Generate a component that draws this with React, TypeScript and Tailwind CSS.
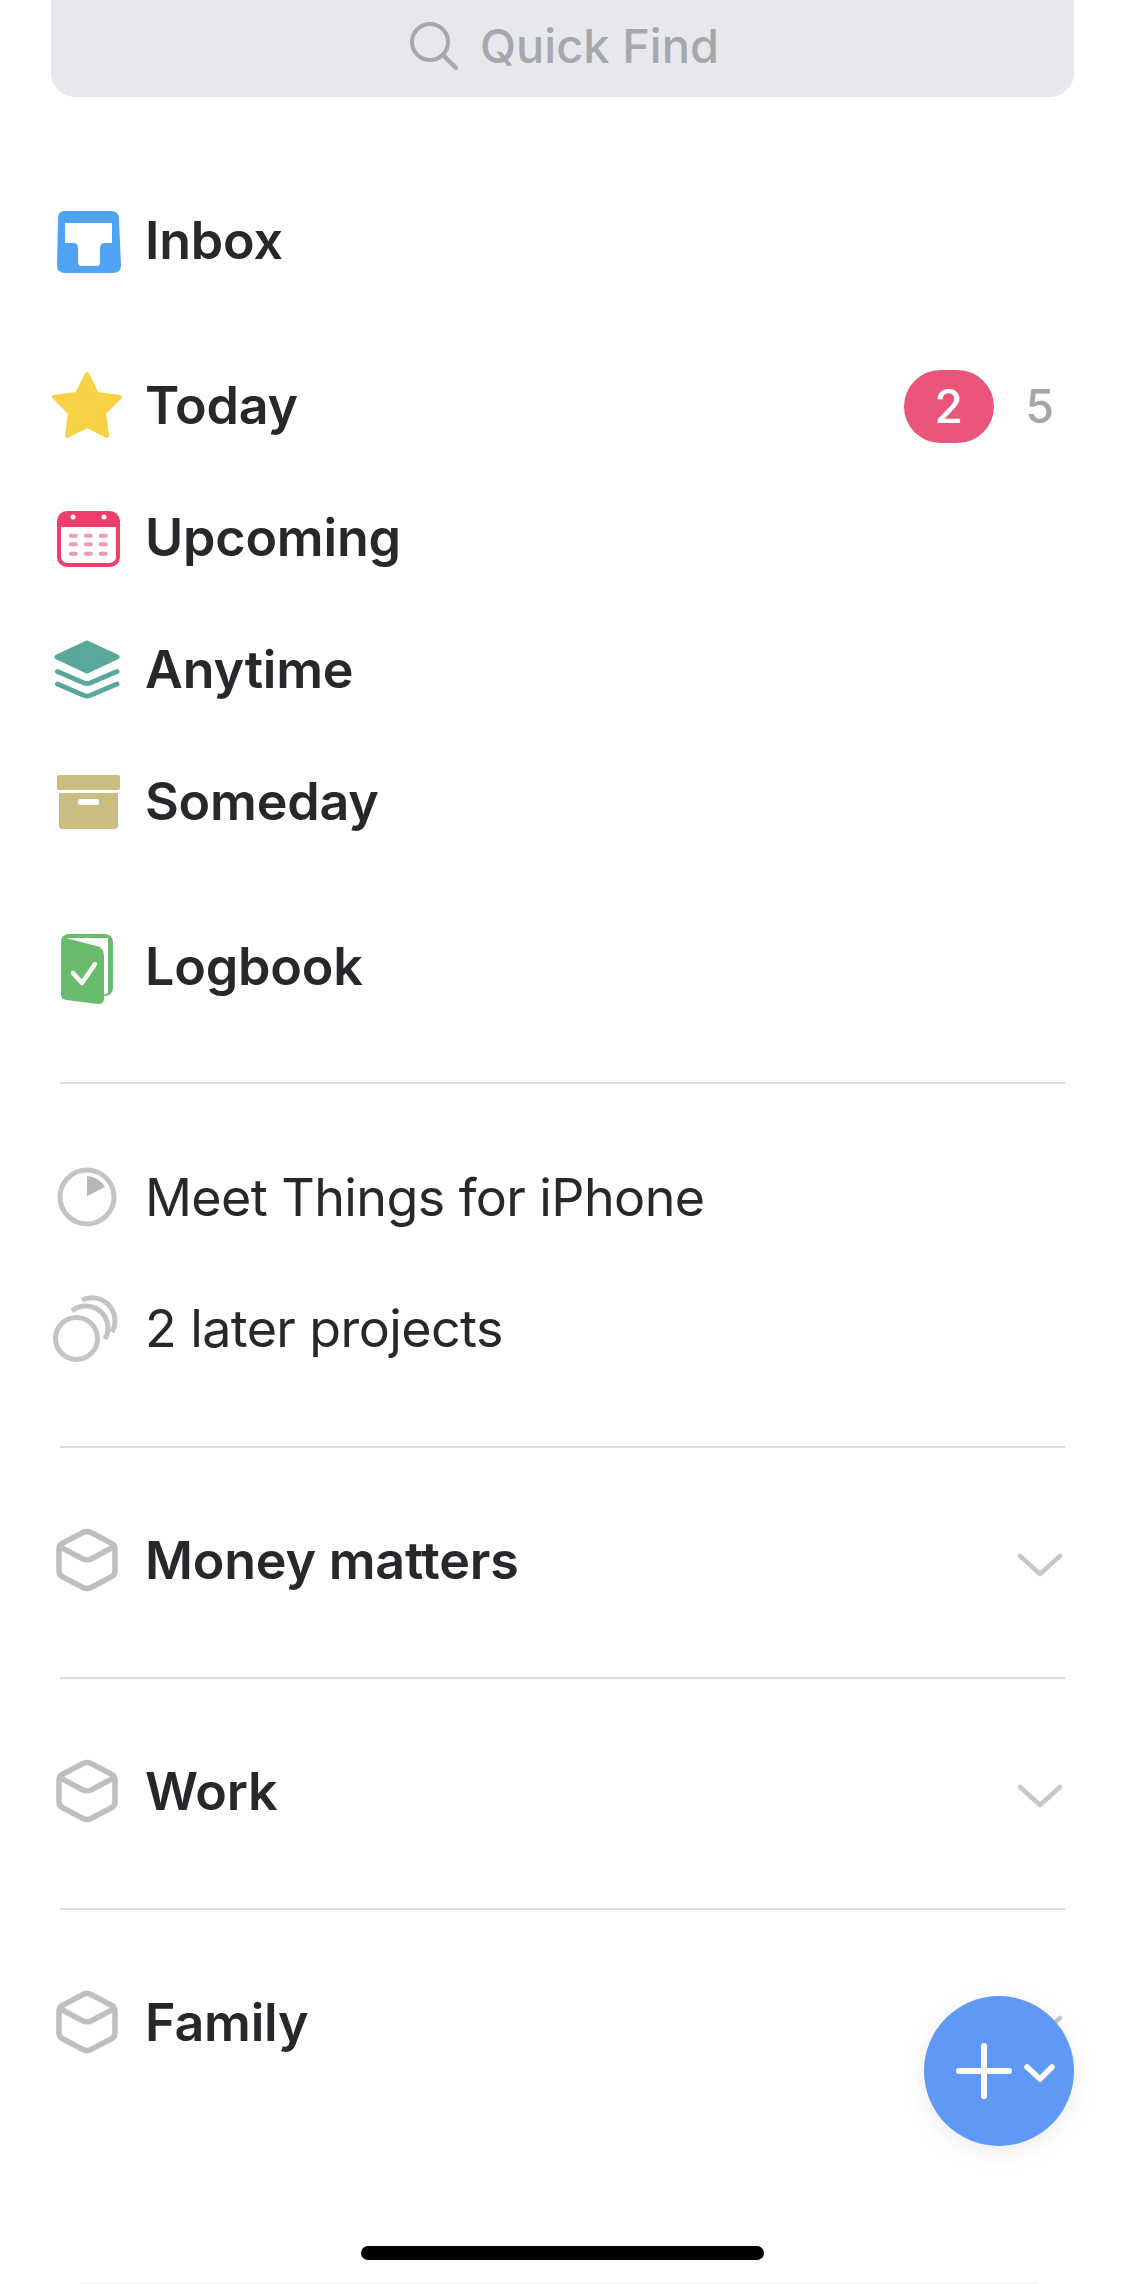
import React from "react";

const IconBox = ({ children }: { children: React.ReactNode }) => (
  <svg viewBox="0 0 80 80" className="w-[80px] h-[80px] shrink-0 mr-[17px]">
    {children}
  </svg>
);

const InboxIcon = () => (
  <IconBox>
    <path
      fillRule="evenodd"
      fill="#4ea3f3"
      d="M16 10H63Q71 10 71 18L73 64Q73 72 65 72H17Q9 72 9 64L10 18Q10 10 16 10ZM17 22V42H25Q30 42 30 47V61Q30 65 33 65H49Q52 65 52 61V47Q52 42 57 42H64V22Z"
    />
  </IconBox>
);

const StarIcon = () => (
  <IconBox>
    <polygon
      fill="#f6d244"
      stroke="#f6d244"
      strokeWidth="4"
      strokeLinejoin="round"
      points="39,8 49,28 72,31 56,47 59,70 39,60 19,70 22,47 6,31 29,28"
    />
  </IconBox>
);

const CalendarIcon = () => {
  const ys = [37.7, 46.3, 55.7];
  const xs = [25.3, 40.3, 55.3];
  return (
    <IconBox>
      <rect x="9" y="13" width="63" height="56" rx="10" fill="#ec3f6c" />
      <path d="M13 29H68V58Q68 65 61 65H20Q13 65 13 58Z" fill="#fff" />
      <circle cx="25" cy="19" r="2.5" fill="#fff" />
      <circle cx="56" cy="19" r="2.5" fill="#fff" />
      {ys.map((y) =>
        xs.map((x) => <rect key={`${x}-${y}`} x={x - 4.5} y={y - 2} width="9" height="4" rx="2" fill="#f09ab5" />)
      )}
    </IconBox>
  );
};

const StackIcon = () => (
  <IconBox>
    <polygon
      points="39,13 69,27 39,41 9,27"
      fill="#5aa89b"
      stroke="#5aa89b"
      strokeWidth="5"
      strokeLinejoin="round"
    />
    <path d="M9.5 41.5L36 53Q39 54 42 53L69 41.5" fill="none" stroke="#5aa89b" strokeWidth="5" strokeLinecap="round" />
    <path d="M9.5 54L36 65.5Q39 66.5 42 65.5L69 54" fill="none" stroke="#5aa89b" strokeWidth="5" strokeLinecap="round" />
  </IconBox>
);

const ArchiveIcon = () => (
  <IconBox>
    <rect x="9" y="13" width="63" height="15" rx="2" fill="#c9bd82" />
    <path
      fillRule="evenodd"
      fill="#c9bd82"
      d="M11 31H70V64Q70 67 67 67H14Q11 67 11 64ZM32 37Q30 37 30 39V41Q30 43 32 43H49Q51 43 51 41V39Q51 37 49 37Z"
    />
  </IconBox>
);

const LogbookIcon = () => (
  <IconBox>
    <rect x="13" y="7" width="52" height="62" rx="8" fill="#69bc6b" />
    <path d="M18 11H60V66L52 70V20Z" fill="#fff" />
    <path d="M13 15L48 19Q56 21 56 29V72Q56 77 50 77L18 73Q13 72 13 68Z" fill="#69bc6b" />
    <path d="M25 46L34 56L47 37" fill="none" stroke="#fff" strokeWidth="4.5" strokeLinecap="round" strokeLinejoin="round" />
  </IconBox>
);

const ProjectIcon = () => (
  <IconBox>
    <circle cx="39" cy="39" r="27" fill="none" stroke="#c2c4c6" strokeWidth="5" />
    <path d="M39 18Q51 19 57 29L39 38Z" fill="#b4b6b8" />
  </IconBox>
);

const LaterIcon = () => (
  <IconBox>
    <circle cx="28.5" cy="49.5" r="21" fill="none" stroke="#c2c4c6" strokeWidth="5" />
    <path d="M24 22A22 22 0 0 1 57 50" fill="none" stroke="#c2c4c6" strokeWidth="5" />
    <path d="M34 11A23 23 0 0 1 64 43" fill="none" stroke="#c2c4c6" strokeWidth="5" />
  </IconBox>
);

const AreaIcon = () => (
  <IconBox>
    <path
      d="M35 9.5Q39 7.5 43 9.5L63 20Q67 22 67 26V48Q67 52 63 54L43 64.5Q39 66.5 35 64.5L15 54Q11 52 11 48V26Q11 22 15 20Z"
      fill="none"
      stroke="#bdbfc1"
      strokeWidth="5.5"
      strokeLinejoin="round"
    />
    <path d="M12.5 24L34 35.5Q39 38 44 35.5L65.5 24" fill="none" stroke="#bdbfc1" strokeWidth="5.5" strokeLinecap="round" />
  </IconBox>
);

const Chevron = () => (
  <svg viewBox="0 0 44 24" className="w-[44px] h-[24px] shrink-0 mr-[12px] mt-[5px]">
    <path d="M2 3L22 21L42 3" fill="none" stroke="#c6c8ca" strokeWidth="4.5" strokeLinecap="round" strokeLinejoin="round" />
  </svg>
);

const Row = ({
  icon,
  label,
  regular,
  lifted,
  children,
}: {
  icon: React.ReactNode;
  label: string;
  regular?: boolean;
  lifted?: boolean;
  children?: React.ReactNode;
}) => (
  <div className={`flex items-center ${regular ? "h-[131px]" : "h-[132px]"}`}>
    {icon}
    <span
      className={`flex-1 text-[52px] leading-none text-[#26282b] ${
        regular ? "font-normal tracking-[-0.6px]" : "font-semibold tracking-[-0.2px]"
      } ${lifted ? "pb-[4px]" : ""}`}
    >
      {label}
    </span>
    {children}
  </div>
);

const Divider = () => <div className="h-[2px] bg-[#dcdedf] ml-[12px] mr-[9px]" />;

const AreaSection = ({ label }: { label: string }) => (
  <div className="flex flex-col justify-center h-[229px]">
    <Row icon={<AreaIcon />} label={label} lifted>
      <Chevron />
    </Row>
  </div>
);

export default function App() {
  return (
    <div className="relative w-[1125px] h-[2284px] overflow-hidden bg-white font-['Inter',sans-serif]">
      <div className="pl-[48px] pr-[51px]">
        {/* search field, scrolled partly above the top edge */}
        <div className="flex items-center justify-center gap-[22px] ml-[3px] h-[97px] pb-[6px] pl-[4px] rounded-b-[24px] bg-[#e6e8ec]">
          <svg viewBox="0 0 48 48" className="w-[48px] h-[48px]">
            <circle cx="20" cy="20" r="18" fill="none" stroke="#a6a8ac" strokeWidth="4" />
            <path d="M33 33L46 46" stroke="#a6a8ac" strokeWidth="4.5" strokeLinecap="round" />
          </svg>
          <span className="text-[47px] leading-none font-medium text-[#a6a8ac]">Quick Find</span>
        </div>

        <div className="pt-[78px]">
          <Row icon={<InboxIcon />} label="Inbox" />
        </div>

        <div className="pt-[33px]">
          <Row icon={<StarIcon />} label="Today">
            <span className="flex items-center justify-center w-[90px] h-[73px] rounded-full bg-[#ea5579] text-white text-[46px] font-medium">
              2
            </span>
            <span className="ml-[32px] mr-[20px] text-[46px] font-medium text-[#a3a5a7]">5</span>
          </Row>
          <Row icon={<CalendarIcon />} label="Upcoming" />
          <Row icon={<StackIcon />} label="Anytime" />
          <Row icon={<ArchiveIcon />} label="Someday" />
        </div>

        <div className="pt-[33px] pb-[49px]">
          <Row icon={<LogbookIcon />} label="Logbook" />
        </div>

        <Divider />

        <div className="pt-[48px] pb-[52px]">
          <Row icon={<ProjectIcon />} label="Meet Things for iPhone" regular />
          <Row icon={<LaterIcon />} label="2 later projects" regular />
        </div>

        <Divider />
        <AreaSection label="Money matters" />
        <Divider />
        <AreaSection label="Work" />
        <Divider />
        <AreaSection label="Family" />
      </div>

      {/* floating add button */}
      <button className="absolute left-[924px] top-[1996px] flex items-center w-[150px] h-[150px] rounded-full bg-[#5f99f5] shadow-[0_6px_24px_rgba(0,0,0,0.08)]">
        <svg viewBox="0 0 150 150" className="w-[150px] h-[150px]">
          <path d="M35 75H85M60 50V100" stroke="#fff" strokeWidth="6" strokeLinecap="round" fill="none" />
          <path d="M103 71L116 83L128 71" stroke="#fff" strokeWidth="5.5" strokeLinecap="round" strokeLinejoin="round" fill="none" />
        </svg>
      </button>

      {/* home indicator */}
      <div className="absolute left-[361px] top-[2246px] w-[403px] h-[14px] rounded-full bg-black" />
      <div className="absolute left-[80px] right-[88px] bottom-0 h-[2px] bg-[#f5f5f5]" />
    </div>
  );
}
